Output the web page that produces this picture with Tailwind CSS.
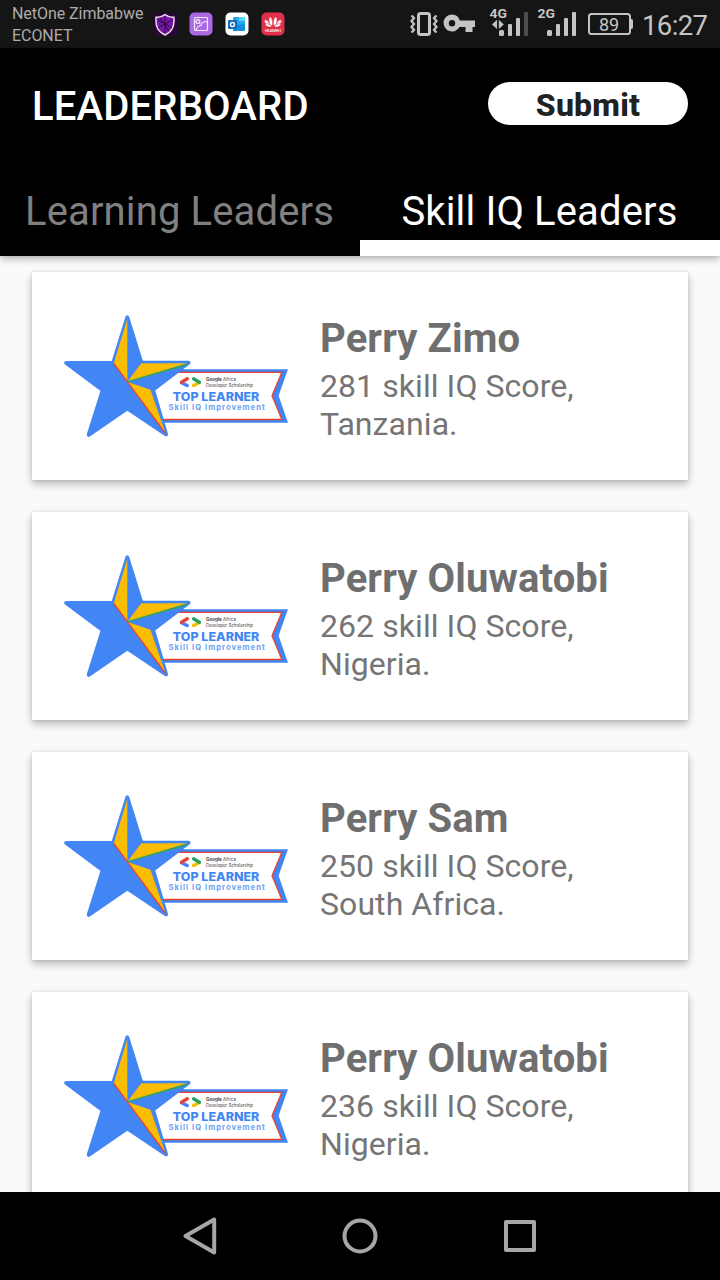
<!DOCTYPE html>
<html lang="en">
<head>
<meta charset="utf-8">
<title>Leaderboard</title>
<script src="https://cdn.jsdelivr.net/npm/@tailwindcss/browser@4"></script>
</head>
<body class="w-[720px] h-[1280px] overflow-hidden bg-[#fafafa] flex flex-col font-['Roboto',sans-serif]">

<svg class="hidden" aria-hidden="true">
  <symbol id="badge" viewBox="64 314 224 124">
    <path d="M150 369.300H288L278.600 395.800L288 422.800H150Z" fill="#4285f4"/>
    <path d="M150 372.300H281.900L272 395.800L281.900 419.500H150Z" fill="#fff" stroke="#ea4335" stroke-width="1.300"/>
    <path d="M127.300 317.500L141.300 362.700H188.500L153 389.700L166 434.400L127.300 408.300L88.700 434.800L102.800 390.200L66.200 363H113.200Z" fill="#4285f4" stroke="#4285f4" stroke-width="4" stroke-linejoin="round"/>
    <path d="M127.300 319V381.500L113.800 363.300Z" fill="#fbbc04"/>
    <path d="M127.500 381.500L141.300 363.200H187Z" fill="#fbbc04"/>
    <path d="M127.700 382L150.500 389.700L165.500 433Z" fill="#fbbc04"/>
    <path d="M127.600 381.600L188 364.300" stroke="#34a853" stroke-width="1.500"/>
    <path d="M113.800 363.300L165.500 433.500" stroke="#ea4335" stroke-width="1.300"/>
    <g stroke-width="3.400" fill="none" stroke-linecap="round">
      <path d="M181.500 382.800L187.200 385.500" stroke="#4285f4"/>
      <path d="M187.300 378.800L181.500 382.300" stroke="#ea4335"/>
      <path d="M193.600 385.500L199.300 382.500" stroke="#fbbc04"/>
      <path d="M193.600 378.800L199.300 382.300" stroke="#1fa463"/>
    </g>
    <g font-family="Inter, sans-serif" fill="#444">
      <text x="206" y="381" font-size="4.800" textLength="30" lengthAdjust="spacingAndGlyphs"><tspan font-weight="700">Google</tspan> Africa</text>
      <text x="206" y="386.500" font-size="4.600" textLength="47" lengthAdjust="spacingAndGlyphs">Developer Scholarship</text>
    </g>
    <g font-family="Inter, sans-serif">
      <text x="172.800" y="401" font-size="11.600" font-weight="800" fill="#4285f4" textLength="86.600" lengthAdjust="spacingAndGlyphs">TOP LEARNER</text>
      <text x="168.400" y="410.400" font-size="7.700" font-weight="700" fill="#6ea1f6" textLength="96.400">Skill IQ Improvement</text>
    </g>
  </symbol>
</svg>

<!-- Status bar -->
<header class="h-12 shrink-0 bg-[#151515] flex items-center text-[#b8b8b8]">
  <div class="w-[154px] pl-3 pt-[2px] text-[16px] leading-[22px] tracking-[-0.05px] text-[#acacac] whitespace-nowrap"><div>NetOne Zimbabwe</div><div>ECONET</div></div>
  <div class="flex items-center gap-3">
    <svg class="w-[23px] h-[23px]" viewBox="0 0 22 22"><rect width="22" height="22" rx="4" fill="#2b0538"/><path d="M10.500 1.500Q6 4.500 2 4Q.5 17 10.500 21Q20.500 17 19 4Q15 4.500 10.500 1.500Z" fill="#7a18a5" stroke="#e4dce8" stroke-width="1.400"/><path d="M4 7L17 14M17 7L4 14M10.500 3V19M6 5L14 17" stroke="#34094c"/></svg>
    <svg class="w-[24px] h-[24px]" viewBox="0 0 24 24" fill="none"><rect x=".5" y=".5" width="23" height="23" rx="5" fill="#ad68e6"/><g stroke="#f4eafc" stroke-width="1.200"><rect x="5.500" y="5.500" width="13" height="13" rx="1"/><circle cx="9" cy="9.500" r="1.900"/><path d="M7 18.500Q8 14 12 13.500Q12 9.500 18.500 9.500"/></g></svg>
    <svg class="w-[24px] h-[24px]" viewBox="0 0 24 24"><rect x=".5" y=".5" width="23" height="23" rx="5" fill="#fff"/><rect x="8" y="5" width="12" height="13" rx="1" fill="#28a8ea"/><path d="M14 5H20V9H14Z" fill="#50d9ff"/><path d="M8 13L20 12V18Q20 19 19 19H8Z" fill="#1490df"/><rect x="3" y="8" width="9" height="9" rx="1" fill="#0f6cbd"/><circle cx="7.500" cy="12.500" r="2" fill="none" stroke="#fff" stroke-width="1.300"/></svg>
    <svg class="w-[24px] h-[24px]" viewBox="0 0 24 24"><rect x=".5" y=".5" width="23" height="23" rx="5" fill="#e1304a"/><g fill="#fff" stroke="#e1304a" stroke-width=".5"><ellipse cx="10.300" cy="9.500" rx="1.700" ry="4.300" transform="rotate(-8 10 13)"/><ellipse cx="13.700" cy="9.500" rx="1.700" ry="4.300" transform="rotate(8 14 13)"/><ellipse cx="8" cy="10" rx="1.700" ry="4" transform="rotate(-38 9 13)"/><ellipse cx="16" cy="10" rx="1.700" ry="4" transform="rotate(38 15 13)"/><ellipse cx="7.500" cy="13.300" rx="3.200" ry="1.400" transform="rotate(16 7 13)"/><ellipse cx="16.500" cy="13.300" rx="3.200" ry="1.400" transform="rotate(-16 17 13)"/></g><text x="4" y="20" textLength="16" lengthAdjust="spacingAndGlyphs" font-size="4" font-weight="500" fill="#fff" font-family="Roboto, sans-serif">HUAWEI</text></svg>
  </div>
  <svg class="ml-auto w-[320px] h-12" viewBox="400 0 320 48" font-family="Roboto, sans-serif">
    <g fill="none" stroke="#c4c4c4">
      <rect x="418.500" y="13.500" width="11" height="21" rx="2" stroke-width="3"/>
      <path d="M411.500 15.500L414 18L411.500 21L414 24L411.500 27L414 30L411.500 32.500M436.500 15.500L434 18L436.500 21L434 24L436.500 27L434 30L436.500 32.500" stroke-width="2.200"/>
    </g>
    <path fill="#c4c4c4" fill-rule="evenodd" d="M452 14.500A8.500 8.500 0 1 0 459.500 27H465.500V32H472.500V27H475V20.500H459.800A8.500 8.500 0 0 0 452 14.500ZM452 20A3.200 3.200 0 1 1 452 26.400A3.200 3.200 0 0 1 452 20Z"/>
    <g fill="#c4c4c4">
      <text x="489.500" y="18" font-size="13.500" font-weight="700" textLength="17.500" lengthAdjust="spacingAndGlyphs">4G</text>
      <path d="M492 24.500L497 19.800V29ZM503.800 24.500L498.800 19.800V29Z"/>
      <rect x="499" y="30" width="5" height="6" rx="1.500"/><rect x="508" y="24" width="4" height="12" rx="1"/><rect x="516" y="18" width="4" height="18" rx="1"/><rect x="524" y="12" width="4" height="24" rx="1" fill="#4c4c4c"/>
      <text x="537.500" y="18" font-size="13.500" font-weight="700" textLength="17.500" lengthAdjust="spacingAndGlyphs">2G</text>
      <rect x="547" y="30" width="5" height="6" rx="1.500"/><rect x="556" y="24" width="4" height="12" rx="1"/><rect x="564" y="18" width="4" height="18" rx="1"/><rect x="572" y="12" width="4" height="24" rx="1"/>
      <path d="M630.500 19H631.500Q633 19 633 21V27Q633 29 631.500 29H630.500Z"/>
      <text x="599" y="31" font-size="18" textLength="20">89</text>
      <text x="642" y="34.500" font-size="27.500" textLength="66">16:27</text>
    </g>
    <rect x="589" y="14" width="41" height="20" rx="2.500" fill="none" stroke="#c4c4c4" stroke-width="2"/>
  </svg>
</header>

<!-- App bar -->
<section class="h-[208px] shrink-0 bg-black text-white flex flex-col relative z-10 shadow-[0_2px_8px_rgba(0,0,0,0.35)]">
  <div class="h-28 px-8 flex items-start justify-between">
    <h1 class="text-[40px] leading-[48px] font-medium tracking-[0.17px] pt-[35px]">LEADERBOARD</h1>
    <button class="mt-[34px] w-[200px] h-[43px] rounded-full bg-white text-[#212121] text-[32px] font-extrabold leading-[43px] tracking-[0.2px] pt-[2px]">Submit</button>
  </div>
  <nav class="h-24 grid grid-cols-2 text-[40px] text-center leading-[48px] tracking-[0.13px] whitespace-nowrap">
    <a class="pt-[28px] pr-[1px] text-[#808080]">Learning Leaders</a>
    <a class="pt-[28px] pr-[1px] border-b-[16px] border-white">Skill IQ Leaders</a>
  </nav>
</section>

<!-- Ranking -->
<main class="h-[936px] shrink-0 px-8 pt-4 flex flex-col gap-8 overflow-hidden text-[#757575]">
  <article class="h-[208px] shrink-0 bg-white px-8 flex items-center gap-8 shadow-[0_4px_8px_rgba(0,0,0,0.27),0_0_3px_rgba(0,0,0,0.1)]">
    <svg class="w-[224px] h-[124px] shrink-0"><use href="#badge"/></svg>
    <div class="pt-[5px]"><h2 class="text-[40px] leading-[47px] tracking-[0.12px] font-bold text-[#6f6f6f]">Perry Zimo</h2><p class="text-[32px] leading-[38px] tracking-[0.07px] pt-[5px]">281 skill IQ Score,<br>Tanzania.</p></div>
  </article>
  <article class="h-[208px] shrink-0 bg-white px-8 flex items-center gap-8 shadow-[0_4px_8px_rgba(0,0,0,0.27),0_0_3px_rgba(0,0,0,0.1)]">
    <svg class="w-[224px] h-[124px] shrink-0"><use href="#badge"/></svg>
    <div class="pt-[5px]"><h2 class="text-[40px] leading-[47px] tracking-[0.12px] font-bold text-[#6f6f6f]">Perry Oluwatobi</h2><p class="text-[32px] leading-[38px] tracking-[0.07px] pt-[5px]">262 skill IQ Score,<br>Nigeria.</p></div>
  </article>
  <article class="h-[208px] shrink-0 bg-white px-8 flex items-center gap-8 shadow-[0_4px_8px_rgba(0,0,0,0.27),0_0_3px_rgba(0,0,0,0.1)]">
    <svg class="w-[224px] h-[124px] shrink-0"><use href="#badge"/></svg>
    <div class="pt-[5px]"><h2 class="text-[40px] leading-[47px] tracking-[0.12px] font-bold text-[#6f6f6f]">Perry Sam</h2><p class="text-[32px] leading-[38px] tracking-[0.07px] pt-[5px]">250 skill IQ Score,<br>South Africa.</p></div>
  </article>
  <article class="h-[208px] shrink-0 bg-white px-8 flex items-center gap-8 shadow-[0_4px_8px_rgba(0,0,0,0.27),0_0_3px_rgba(0,0,0,0.1)]">
    <svg class="w-[224px] h-[124px] shrink-0"><use href="#badge"/></svg>
    <div class="pt-[5px]"><h2 class="text-[40px] leading-[47px] tracking-[0.12px] font-bold text-[#6f6f6f]">Perry Oluwatobi</h2><p class="text-[32px] leading-[38px] tracking-[0.07px] pt-[5px]">236 skill IQ Score,<br>Nigeria.</p></div>
  </article>
</main>

<!-- System navigation -->
<footer class="h-[88px] shrink-0 bg-black flex justify-center gap-[120px] pt-6 relative z-10">
  <svg class="w-10 h-10" viewBox="180 1216 40 40"><path d="M214.200 1219.500V1252.500L185.500 1236Z" fill="none" stroke="#a6a6a6" stroke-width="4" stroke-linejoin="round"/></svg>
  <svg class="w-10 h-10" viewBox="340 1216 40 40"><circle cx="360" cy="1236" r="15.500" fill="none" stroke="#a6a6a6" stroke-width="4"/></svg>
  <svg class="w-10 h-10" viewBox="500 1216 40 40"><rect x="506" y="1222" width="28" height="28" fill="none" stroke="#a6a6a6" stroke-width="4" stroke-linejoin="round"/></svg>
</footer>
</body>
</html>
